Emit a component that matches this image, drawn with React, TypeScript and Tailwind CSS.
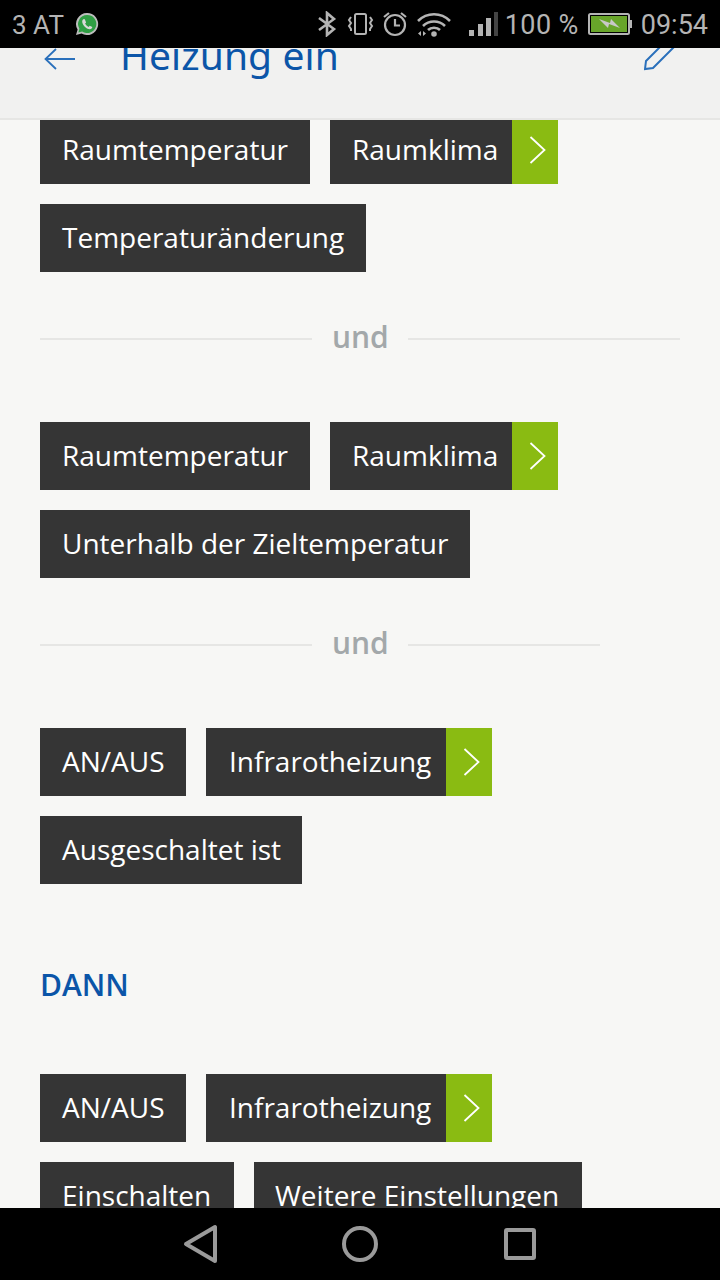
import React from "react";

function Chip({ label, arrow, width, pad }: { label: string; arrow?: boolean; width?: string; pad?: string }) {
  return (
    <div className={`flex h-[68px] items-stretch bg-[#353535] text-white ${width ?? ""}`}>
      <span className={`flex flex-1 items-center pb-0.5 whitespace-nowrap ${pad ?? "pl-[22px]"} ${arrow ? "pr-[14px]" : "pr-[22px]"}`}>
        {label}
      </span>
      {arrow && (
        <span className="flex w-[46px] shrink-0 items-center bg-[#8abb12] pl-[17px]">
          <svg width="17" height="28" viewBox="0 0 17 28" fill="none" stroke="#fff" strokeWidth="1.800">
            <path d="M1.500 1l14 13-14 13" />
          </svg>
        </span>
      )}
    </div>
  );
}

function Separator({ short }: { short?: boolean }) {
  return (
    <div className="flex h-[34px] items-center gap-5">
      <div className="mt-0.5 h-0.5 w-[272px] bg-[#e6e6e4]" />
      <span className="mb-1 w-[56px] text-center text-[30px] font-semibold text-[#a3a8aa]">und</span>
      <div className={short ? "mt-0.5 h-0.5 w-[192px] bg-[#e6e6e4]" : "mt-0.5 h-0.5 w-[272px] bg-[#e6e6e4]"} />
    </div>
  );
}

function StatusBar() {
  return (
    <div className="z-10 flex h-12 shrink-0 items-center justify-between bg-black pl-3 pr-3 font-['Roboto',sans-serif] text-[27px] text-[#b4b4b4]">
      <div className="flex items-center gap-[11px]">
        <span className="mt-0.5 text-[26px]">3 AT</span>
        <svg width="24" height="24" viewBox="0 0 24 24">
          <path d="M12 1a11 11 0 0 0-9.400 16.600L1 23l5.600-1.500A11 11 0 1 0 12 1z" fill="#bdbdbd" />
          <path d="M12 3a9 9 0 0 0-7.600 13.700l-1 3.700 3.800-1A9 9 0 1 0 12 3z" fill="#2f9e44" />
          <path d="M9 7c-.8 0-1.800 1-1.800 2.500 0 3 3.800 7.500 7.600 7.800 1.500 0 2.500-1 2.500-2.200l-2.600-1.400-1.100 1.200c-1.500-.6-2.800-1.900-3.500-3.400l1-1.100L9.800 7.300z" fill="#d9d9d9" />
        </svg>
      </div>
      <div className="flex items-center">
        <svg width="20" height="26" viewBox="0 0 20 26" fill="none" stroke="#b4b4b4" strokeWidth="2.600" className="mr-[10px]">
          <path d="M2 7l15 11-7 6V2l7 6L2 19" />
        </svg>
        <svg width="27" height="24" viewBox="0 0 27 24" fill="none" stroke="#b4b4b4" strokeWidth="2" className="mr-[8px]">
          <rect x="8" y="2" width="11" height="20" rx="1.500" />
          <path d="M4 5l-2 3 2 3-2 3 2 3 0 2M23 5l2 3-2 3 2 3-2 3 0 2" />
        </svg>
        <svg width="26" height="26" viewBox="0 0 26 26" fill="none" stroke="#b4b4b4" strokeWidth="2.200" className="mr-[8px]">
          <circle cx="13" cy="14" r="10" />
          <path d="M13 8v6.500h5M2 6l5-4M24 6l-5-4" />
        </svg>
        <svg width="36" height="26" viewBox="0 0 36 26" fill="none" stroke="#b4b4b4" strokeWidth="2.600" className="mr-[17px]">
          <path d="M2 10c9-9 23-9 32 0M7 15c6-6 16-6 22 0M12 19c3-3 9-3 12 0" />
          <circle cx="18" cy="23" r="1.500" fill="#b4b4b4" />
          <path d="M5 20v5l-3-2.500zM7 20v5l3-2.500z" fill="#b4b4b4" stroke="none" />
        </svg>
        <svg width="29" height="26" viewBox="0 0 29 26" className="mr-[7px]">
          <rect x="0" y="19" width="5" height="6" fill="#b4b4b4" />
          <rect x="9" y="13" width="5" height="12" fill="#b4b4b4" />
          <rect x="17" y="7" width="5" height="18" fill="#b4b4b4" />
          <rect x="25" y="1" width="4" height="24" fill="#444" />
        </svg>
        <span className="mr-[9px] mt-0.5 whitespace-nowrap tracking-[0.4px]">100 %</span>
        <svg width="44" height="22" viewBox="0 0 44 22" className="mr-[9px]">
          <rect x="1" y="1" width="40" height="20" rx="1.500" fill="none" stroke="#b4b4b4" strokeWidth="2" />
          <rect x="3" y="3" width="36" height="16" fill="#68a52a" />
          <rect x="42" y="7" width="2" height="8" fill="#b4b4b4" />
          <path d="M11 6l11 4 1-4 9 9-11-4-1 4z" fill="#c8c8c8" />
        </svg>
        <span className="mt-0.5">09:54</span>
      </div>
    </div>
  );
}

export default function App() {
  return (
    <div className="flex h-[1280px] w-[720px] flex-col overflow-hidden bg-[#f7f7f5] font-['Open_Sans',sans-serif] text-[28px]">
      <StatusBar />
      <header className="flex h-[72px] shrink-0 items-start justify-between overflow-hidden border-b-2 border-[#e6e6e4] bg-[#f1f1f0] pl-[44px] pr-[44px]">
        <div className="flex items-center">
          <svg width="32" height="24" viewBox="0 0 32 24" fill="none" stroke="#2a70bb" strokeWidth="1.800" className="mr-[44px] mt-[-9px]">
            <path d="M31 11H2M12 1L1.500 11 12 21" />
          </svg>
          <h1 className="mt-[-18px] whitespace-nowrap font-['Noto_Sans',sans-serif] text-[39px] leading-[50px] tracking-[0.1px] text-[#0b55a8]">
            Heizung ein
          </h1>
        </div>
        <svg width="32" height="36" viewBox="0 0 32 36" fill="none" stroke="#2a70bb" strokeWidth="2" className="mt-[-13px]">
          <path d="M26 2L2 26l-1 8 8-1L33 9M22 6l7 7" />
        </svg>
      </header>
      <main className="flex-1 overflow-hidden px-10">
        <div className="mt-[-4px] flex flex-col">
          <div className="flex flex-col gap-5">
            <div className="flex gap-5">
              <Chip label="Raumtemperatur" />
              <Chip label="Raumklima" arrow />
            </div>
            <div className="flex gap-5">
              <Chip label="Temperaturänderung" />
            </div>
          </div>
          <div className="mb-[67px] mt-[49px]">
            <Separator />
          </div>
          <div className="flex flex-col gap-5">
            <div className="flex gap-5">
              <Chip label="Raumtemperatur" />
              <Chip label="Raumklima" arrow />
            </div>
            <div className="flex gap-5">
              <Chip label="Unterhalb der Zieltemperatur" />
            </div>
          </div>
          <div className="mb-[67px] mt-[49px]">
            <Separator short />
          </div>
          <div className="flex flex-col gap-5">
            <div className="flex gap-5">
              <Chip label="AN/AUS" width="w-[146px]" />
              <Chip label="Infrarotheizung" arrow width="w-[286px]" pad="pl-[23px]" />
            </div>
            <div className="flex gap-5">
              <Chip label="Ausgeschaltet ist" width="w-[262px]" />
            </div>
          </div>
          <h2 className="mb-[68px] mt-[80px] h-[42px] text-[30px] font-semibold leading-[42px] text-[#0b55a8]">DANN</h2>
          <div className="flex flex-col gap-5">
            <div className="flex gap-5">
              <Chip label="AN/AUS" width="w-[146px]" />
              <Chip label="Infrarotheizung" arrow width="w-[286px]" pad="pl-[23px]" />
            </div>
            <div className="flex gap-5">
              <Chip label="Einschalten" width="w-[194px]" />
              <Chip label="Weitere Einstellungen" width="w-[328px]" pad="pl-[21px]" />
            </div>
          </div>
        </div>
      </main>
      <nav className="z-10 flex h-[72px] shrink-0 items-center justify-center gap-[104px] bg-black">
        <svg width="56" height="40" viewBox="0 0 56 40" fill="none" stroke="#9a9a9a" strokeWidth="4" strokeLinejoin="round">
          <path d="M43 3v34L14 20z" />
        </svg>
        <svg width="56" height="40" viewBox="0 0 56 40" fill="none" stroke="#9a9a9a" strokeWidth="4">
          <circle cx="28" cy="20" r="16" />
        </svg>
        <svg width="56" height="40" viewBox="0 0 56 40" fill="none" stroke="#9a9a9a" strokeWidth="4" strokeLinejoin="round">
          <rect x="14" y="6" width="28" height="28" rx="1" />
        </svg>
      </nav>
    </div>
  );
}
